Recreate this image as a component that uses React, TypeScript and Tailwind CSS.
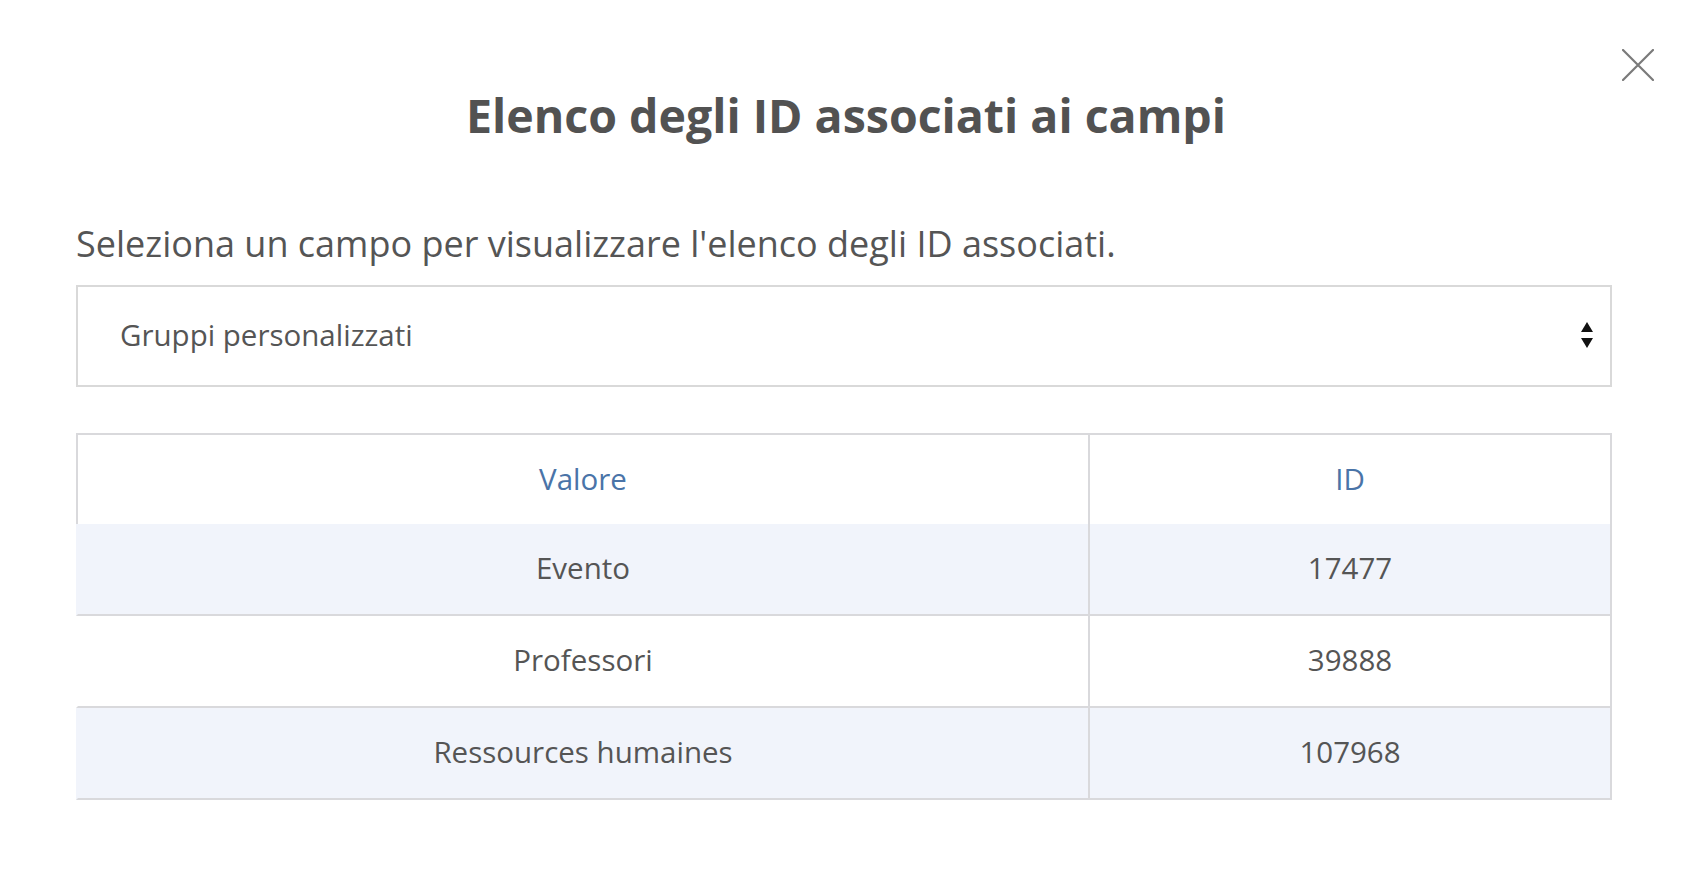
import React from "react";

const rows = [
  { value: "Evento", id: "17477" },
  { value: "Professori", id: "39888" },
  { value: "Ressources humaines", id: "107968" },
];

function CloseIcon() {
  return (
    <svg width="32" height="32" viewBox="0 0 32 32" fill="none">
      <path d="M1 1L31 31M31 1L1 31" stroke="#7a7a7a" strokeWidth="2.2" strokeLinecap="round" />
    </svg>
  );
}

function SelectArrows() {
  return (
    <svg width="12" height="27" viewBox="0 0 12 27">
      <path d="M6 0L12 10H0Z" fill="#111" />
      <path d="M0 16H12L6 26Z" fill="#111" />
    </svg>
  );
}

export default function App() {
  return (
    <div className="relative min-h-screen bg-white font-['Open_Sans',sans-serif] text-[#555]">
      <button className="absolute right-[44px] top-[49px]" aria-label="Chiudi">
        <CloseIcon />
      </button>

      <h1 className="pr-[6px] pt-[92px] text-center text-[46.5px] font-bold leading-none text-[#525252]">
        Elenco degli ID associati ai campi
      </h1>

      <div className="pl-[76px] pr-[86px]">
        <p className="mt-[87px] text-[36px] leading-none">
          Seleziona un campo per visualizzare l'elenco degli ID associati.
        </p>

        <div className="mt-[23px] flex h-[102px] items-center justify-between border-2 border-[#d9d9d9] pl-[42px] pr-[17px]">
          <span className="text-[29.5px]">Gruppi personalizzati</span>
          <SelectArrows />
        </div>

        <div className="mt-[46px] text-[29.5px]">
          <div className="grid h-[91px] grid-cols-[1012px_1fr] border-x-2 border-t-2 border-[#d9d9dc] text-[#4a74a8]">
            <div className="flex items-center justify-center border-r-2 border-[#d9d9dc]">Valore</div>
            <div className="flex items-center justify-center">ID</div>
          </div>
          {rows.map((r, i) => (
            <div
              key={r.id}
              className={`grid h-[92px] grid-cols-[1012px_1fr] border-b-2 border-l-2 border-r-2 border-[#d9d9dc] border-l-transparent ${
                i % 2 === 0 ? "bg-[#f1f4fb]" : "bg-white"
              }`}
            >
              <div className="flex items-center justify-center border-r-2 border-[#d9d9dc]">{r.value}</div>
              <div className="flex items-center justify-center">{r.id}</div>
            </div>
          ))}
        </div>
      </div>
    </div>
  );
}
